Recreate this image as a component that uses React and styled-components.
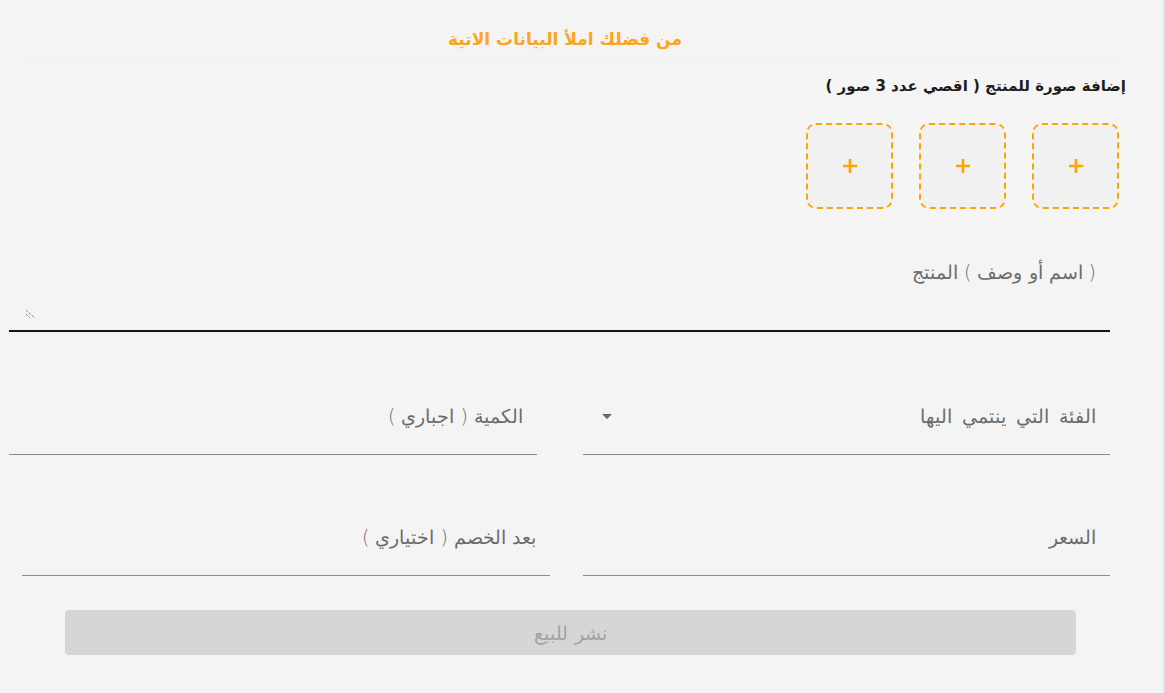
import React from "react";
import styled, { createGlobalStyle } from "styled-components";

const Global = createGlobalStyle`
  html, body {
    margin: 0;
    padding: 0;
    background: #f4f4f4;
  }
  body {
    font-family: "DejaVu Sans", "Noto Sans", sans-serif;
  }
`;

function ResizeGrip() {
  return (
    <svg width="12" height="10" viewBox="0 0 12 10">
      <line x1="1" y1="1" x2="10" y2="9" stroke="#555" strokeWidth="1" strokeDasharray="1 1" />
      <line x1="1" y1="5" x2="5" y2="9" stroke="#555" strokeWidth="1" strokeDasharray="1 1" />
    </svg>
  );
}

function Plus() {
  return (
    <svg width="16" height="16" viewBox="0 0 16 16">
      <path d="M8 1v14M1 8h14" stroke="#ffa500" strokeWidth="2.6" />
    </svg>
  );
}

function App() {
  return (
    <Page dir="rtl">
      <Global />
      <Form>
        <Title>من فضلك املأ البيانات الاتية</Title>

        <ImageSection>
          <SectionLabel>إضافة صورة للمنتج ( اقصي عدد 3 صور )</SectionLabel>
          <Slots>
            {[0, 1, 2].map((i) => (
              <Slot key={i} type="button">
                <Plus />
              </Slot>
            ))}
          </Slots>
        </ImageSection>

        <TextArea>
          <Label>( اسم أو وصف ) المنتج</Label>
          <GripRow>
            <ResizeGrip />
          </GripRow>
        </TextArea>

        <Row $inset={9} $top={72}>
          <Field $width={527}>
            <Label $spread>الفئة التي ينتمي اليها</Label>
            <Arrow />
          </Field>
          <Field $width={528}>
            <Label>الكمية ( اجباري )</Label>
          </Field>
        </Row>

        <Row $inset={22} $top={70}>
          <Field $width={527}>
            <Label>السعر</Label>
          </Field>
          <Field $width={528}>
            <Label>بعد الخصم ( اختياري )</Label>
          </Field>
        </Row>

        <Submit type="button" disabled>
          نشر للبيع
        </Submit>
      </Form>
    </Page>
  );
}

const Page = styled.div`
  width: 1165px;
  min-height: 693px;
  border-right: 2px solid #e3e3e3;
  box-sizing: border-box;
  direction: rtl;
`;

const Form = styled.div`
  width: 1130px;
  margin-left: 0;
  margin-right: auto;
  padding-top: 27px;
  display: flex;
  flex-direction: column;
`;

const Title = styled.h2`
  margin: 0 0 13px;
  text-align: center;
  font-size: 17px;
  line-height: 24px;
  font-weight: 700;
  color: #ffa41b;
`;

const ImageSection = styled.section`
  margin-left: 10px;
  height: 158px;
  border-radius: 12px;
  background: #f5f5f5;
  box-shadow: 0 0 2px rgba(0, 0, 0, 0.03);
  padding: 12px 4px 0 0;
  box-sizing: border-box;
`;

const SectionLabel = styled.div`
  font-size: 15px;
  line-height: 20px;
  font-weight: 700;
  color: #1d1d1d;
`;

const Slots = styled.div`
  display: flex;
  gap: 26px;
  margin-top: 27px;
  margin-right: 7px;
`;

const Slot = styled.button`
  width: 87px;
  height: 86px;
  border: 2px dashed #ffa500;
  border-radius: 10px;
  background: #f1f1f1;
  padding: 0;
  display: flex;
  align-items: center;
  justify-content: center;
  cursor: pointer;
`;

const TextArea = styled.div`
  margin-top: 38px;
  margin-right: 20px;
  margin-left: 9px;
  border-bottom: 2px solid #141414;
  padding: 0 14px 0 0;
  height: 70px;
  display: flex;
  flex-direction: column;
`;

const Label = styled.span`
  font-size: 19px;
  line-height: 24px;
  font-weight: 300;
  color: #6b6b6b;
  white-space: nowrap;
  word-spacing: ${(p) => (p.$spread ? "4px" : "0")};
`;

const GripRow = styled.div`
  margin-top: auto;
  margin-bottom: 11px;
  display: flex;
  justify-content: flex-end;
  padding-left: 16px;
`;

const Row = styled.div`
  display: flex;
  justify-content: space-between;
  margin-top: ${(p) => p.$top}px;
  margin-right: 20px;
  padding-left: ${(p) => p.$inset}px;
`;

const Field = styled.div`
  width: ${(p) => p.$width}px;
  height: 51px;
  box-sizing: border-box;
  border-bottom: 1px solid #8c8c8c;
  padding: 0 14px 0 19px;
  display: flex;
  justify-content: space-between;
  align-items: flex-start;
`;

const Arrow = styled.span`
  margin-top: 10px;
  width: 0;
  height: 0;
  border-left: 5px solid transparent;
  border-right: 5px solid transparent;
  border-top: 5px solid #666;
`;

const Submit = styled.button`
  margin: 34px 54px 0 65px;
  height: 45px;
  border: none;
  border-radius: 4px;
  background: #d6d6d6;
  color: #a3a3a3;
  font-family: "DejaVu Sans", sans-serif;
  font-size: 19px;
  font-weight: 300;
`;

export default App;
